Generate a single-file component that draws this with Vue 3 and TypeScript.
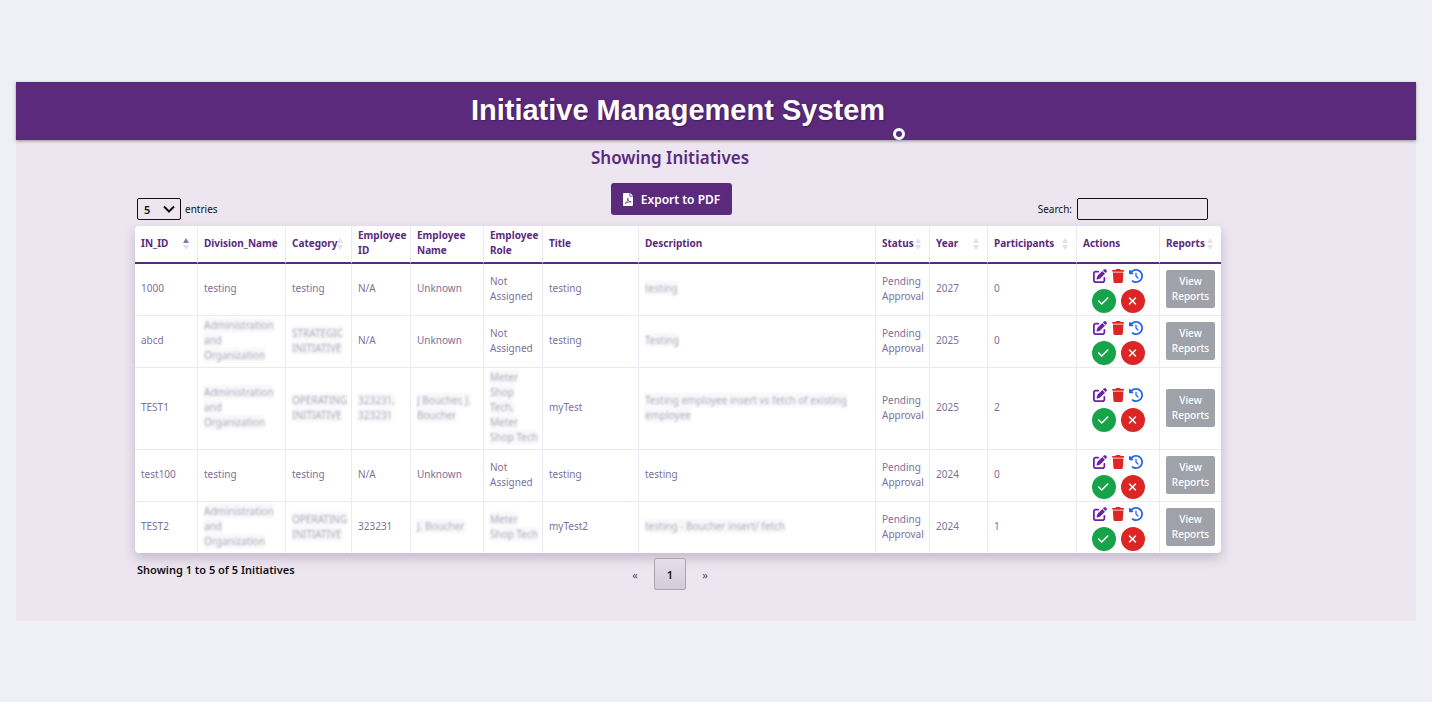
<script setup lang="ts">
import { ref } from 'vue'

interface Cell {
  text: string
  hidden?: boolean
}

interface Column {
  label: string
  key: string
  sort?: 'asc' | 'none'
}

const columns: Column[] = [
  { label: 'IN_ID', key: 'id', sort: 'asc' },
  { label: 'Division_Name', key: 'division', sort: 'none' },
  { label: 'Category', key: 'category', sort: 'none' },
  { label: 'Employee ID', key: 'employee-id' },
  { label: 'Employee Name', key: 'employee-name' },
  { label: 'Employee Role', key: 'role' },
  { label: 'Title', key: 'title' },
  { label: 'Description', key: 'description' },
  { label: 'Status', key: 'status', sort: 'none' },
  { label: 'Year', key: 'year', sort: 'none' },
  { label: 'Participants', key: 'participants', sort: 'none' },
  { label: 'Actions', key: 'actions' },
  { label: 'Reports', key: 'reports', sort: 'none' },
]

const t = (text: string): Cell => ({ text })
const h = (text: string): Cell => ({ text, hidden: true })

const rows: Cell[][] = [
  [t('1000'), t('testing'), t('testing'), t('N/A'), t('Unknown'), t('Not Assigned'), t('testing'), h('testing'), t('Pending Approval'), t('2027'), t('0')],
  [t('abcd'), h('Administration and Organization'), h('STRATEGIC INITIATIVE'), t('N/A'), t('Unknown'), t('Not Assigned'), t('testing'), h('Testing'), t('Pending Approval'), t('2025'), t('0')],
  [t('TEST1'), h('Administration and Organization'), h('OPERATING INITIATIVE'), h('323231, 323231'), h('J Boucher, J. Boucher'), h('Meter Shop Tech, Meter Shop Tech'), t('myTest'), h('Testing employee insert vs fetch of existing employee'), t('Pending Approval'), t('2025'), t('2')],
  [t('test100'), t('testing'), t('testing'), t('N/A'), t('Unknown'), t('Not Assigned'), t('testing'), t('testing'), t('Pending Approval'), t('2024'), t('0')],
  [t('TEST2'), h('Administration and Organization'), h('OPERATING INITIATIVE'), t('323231'), h('J. Boucher'), h('Meter Shop Tech'), t('myTest2'), h('testing - Boucher insert/ fetch'), t('Pending Approval'), t('2024'), t('1')],
]

const pageSize = ref('5')
const search = ref('')
</script>

<template>
  <div class="page">
    <main class="panel">
      <header class="banner">
        <h1>Initiative Management System<span class="ring"></span></h1>
      </header>

      <section class="content">
        <h2>Showing Initiatives</h2>

        <div class="toolbar">
          <label class="entries">
            <span class="select-wrap">
              <select v-model="pageSize">
                <option>5</option>
                <option>10</option>
                <option>25</option>
              </select>
              <svg class="chevron" viewBox="0 0 12 8"><path d="M1 1.5l5 5 5-5" /></svg>
            </span>
            entries
          </label>
          <button class="export" type="button">
            <svg viewBox="0 0 20 26">
              <path d="M2 0h11v7h7v17a2 2 0 0 1-2 2H2a2 2 0 0 1-2-2V2a2 2 0 0 1 2-2z" fill="#fff" />
              <path d="M14.500 0L20 5.500h-5.500z" fill="#fff" />
              <path d="M4 21c3-1 6-6 5.500-11 .5 5 3 8 7 8-4-1-8 0-12.500 3z" fill="none" stroke="#5b2a7c" stroke-width="1.500" />
            </svg>
            Export to PDF
          </button>
          <label class="search">Search: <input v-model="search" type="text" /></label>
        </div>

        <table>
          <colgroup>
            <col v-for="c in columns" :key="c.key" :class="'col-' + c.key" />
          </colgroup>
          <thead>
            <tr>
              <th v-for="c in columns" :key="c.key" scope="col">
                {{ c.label }}
                <svg v-if="c.sort" class="sort" :class="c.sort" viewBox="0 0 6 12">
                  <path class="up" d="M3 0l3 5H0z" />
                  <path class="down" d="M3 12l3-5H0z" />
                </svg>
              </th>
            </tr>
          </thead>
          <tbody>
            <tr v-for="(row, i) in rows" :key="i">
              <td v-for="(cell, j) in row" :key="j">
                <span :class="{ obscured: cell.hidden }">{{ cell.text }}</span>
              </td>
              <td class="actions">
                <div class="icons">
                  <button type="button" class="edit" aria-label="Edit">
                    <svg viewBox="0 0 512 512"><path d="M471.6 21.7c-21.9-21.9-57.3-21.9-79.2 0L362.3 51.7l97.9 97.9 30.1-30.1c21.9-21.9 21.9-57.3 0-79.2L471.6 21.7zm-299.2 220c-6.1 6.1-10.8 13.6-13.5 21.9l-29.6 88.8c-2.9 8.6-.6 18.1 5.8 24.6s15.900 8.700 24.600 5.800l88.800-29.600c8.200-2.700 15.700-7.400 21.900-13.500L437.700 172.300 339.700 74.300 172.400 241.700zM96 64C43 64 0 107 0 160V416c0 53 43 96 96 96H352c53 0 96-43 96-96V320c0-17.700-14.300-32-32-32s-32 14.300-32 32v96c0 17.700-14.300 32-32 32H96c-17.700 0-32-14.300-32-32V160c0-17.700 14.300-32 32-32h96c17.700 0 32-14.300 32-32s-14.300-32-32-32H96z" /></svg>
                  </button>
                  <button type="button" class="trash" aria-label="Delete">
                    <svg viewBox="0 0 448 512"><path d="M135.2 17.7L128 32H32C14.300 32 0 46.300 0 64S14.300 96 32 96H416c17.700 0 32-14.300 32-32s-14.300-32-32-32H320l-7.200-14.300C307.400 6.800 296.300 0 284.200 0H163.800c-12.100 0-23.200 6.800-28.600 17.700zM416 128H32L53.200 467c1.600 25.300 22.600 45 47.900 45H346.900c25.300 0 46.300-19.700 47.900-45L416 128z" /></svg>
                  </button>
                  <button type="button" class="history" aria-label="History">
                    <svg viewBox="0 0 512 512"><path d="M75 75L41 41C25.900 25.900 0 36.600 0 57.900V168c0 13.300 10.700 24 24 24H134.100c21.400 0 32.100-25.900 17-41l-30.800-30.800C155 85.500 203 64 256 64c106 0 192 86 192 192s-86 192-192 192c-40.800 0-78.600-12.700-109.700-34.400c-14.500-10.100-34.400-6.600-44.600 7.900s-6.600 34.400 7.900 44.600C151.200 495 201.700 512 256 512c141.400 0 256-114.600 256-256S397.400 0 256 0C185.300 0 121.300 28.700 75 75zm181 53c-13.300 0-24 10.700-24 24V256c0 6.400 2.500 12.500 7 17l72 72c9.400 9.400 24.600 9.400 33.900 0s9.400-24.600 0-33.900l-65-65V152c0-13.300-10.700-24-24-24z" /></svg>
                  </button>
                </div>
                <div class="decisions">
                  <button type="button" class="approve" aria-label="Approve">
                    <svg viewBox="0 0 448 512"><path d="M438.600 105.400c12.500 12.500 12.500 32.800 0 45.300l-256 256c-12.500 12.500-32.800 12.500-45.300 0l-128-128c-12.500-12.500-12.500-32.800 0-45.300s32.800-12.500 45.300 0L160 338.700 393.400 105.400c12.500-12.500 32.800-12.500 45.300 0z" /></svg>
                  </button>
                  <button type="button" class="reject" aria-label="Reject">
                    <svg viewBox="0 0 384 512"><path d="M342.600 150.600c12.500-12.500 12.500-32.800 0-45.300s-32.800-12.500-45.300 0L192 210.700 86.600 105.400c-12.500-12.500-32.800-12.500-45.300 0s-12.500 32.800 0 45.300L146.700 256 41.400 361.400c-12.500 12.500-12.500 32.800 0 45.300s32.800 12.500 45.300 0L192 301.300 297.400 406.600c12.500 12.500 32.800 12.500 45.300 0s12.500-32.800 0-45.300L237.300 256 342.600 150.600z" /></svg>
                  </button>
                </div>
              </td>
              <td><button type="button" class="report">View Reports</button></td>
            </tr>
          </tbody>
        </table>

        <div class="footer">
          <strong>Showing 1 to 5 of 5 Initiatives</strong>
          <nav class="pager" aria-label="Pages">
            <button type="button">«</button>
            <button type="button" class="current">1</button>
            <button type="button">»</button>
          </nav>
        </div>
      </section>
    </main>
  </div>
</template>

<style>
body {
  background: #eff0f5;
}
</style>

<style scoped>
.page {
  padding: 82px 16px;
  font-family: "Noto Sans", "Open Sans", sans-serif;
  font-size: 11px;
  line-height: 15px;
  color: #111;
}
.page * {
  box-sizing: border-box;
}
button,
input,
select {
  font: inherit;
  color: inherit;
}
button {
  border: 0;
  padding: 0;
  background: none;
}
svg {
  display: block;
}
.panel {
  background: #ede6f1;
  padding-bottom: 31px;
}
.banner {
  background: #5b2a7c;
  padding: 8px 76px 10px 0;
  text-align: center;
  box-shadow: 0 1px 3px rgba(0, 0, 0, 0.4);
}
h1 {
  display: inline-block;
  position: relative;
  margin: 0;
  font: bold 29px/40px "Liberation Sans", Arial, sans-serif;
  color: #fff;
  text-shadow: 1px 1px 2px rgba(0, 0, 0, 0.3);
  vertical-align: top;
}
.ring {
  position: absolute;
  right: -20px;
  bottom: -10px;
  width: 12px;
  height: 12px;
  border: 3px solid #fff;
  border-radius: 50%;
}
.content {
  padding: 6px 195px 0 119px;
}
h2 {
  margin: 0 16px 0 0;
  font-size: 17px;
  line-height: 24px;
  font-weight: 600;
  text-align: center;
  color: #5b2a7c;
}
.toolbar {
  display: grid;
  grid-template-columns: 1fr auto 1fr;
  align-items: end;
  margin: 13px 13px 6px 0;
}
.entries,
.search {
  display: flex;
  align-items: center;
  gap: 4px;
  font-size: 10px;
}
.entries {
  padding-left: 2px;
}
.search {
  justify-content: end;
  gap: 5px;
}
.select-wrap {
  position: relative;
}
select {
  appearance: none;
  display: block;
  width: 44px;
  height: 22px;
  padding: 0 6px;
  border: 1px solid #111;
  border-radius: 2px;
  background: transparent;
  font-size: 11px;
  font-weight: 600;
}
.chevron {
  position: absolute;
  right: 6px;
  top: 7px;
  width: 12px;
  height: 8px;
  fill: none;
  stroke: #111;
  stroke-width: 2;
  pointer-events: none;
}
.search input {
  width: 131px;
  height: 22px;
  border: 1px solid #111;
  border-radius: 2px;
  background: transparent;
}
.export {
  display: flex;
  align-items: center;
  gap: 8px;
  height: 32px;
  margin-bottom: 5px;
  padding: 0 12px;
  border-radius: 3px;
  background: #5b2a7c;
  color: #fff;
  font-size: 12px;
  font-weight: 600;
}
.export svg {
  width: 10px;
  height: 13px;
}
table {
  width: 100%;
  table-layout: fixed;
  border-collapse: separate;
  border-spacing: 0;
  background: #fff;
  border-radius: 4px;
  font-size: 10px;
  box-shadow: 0 5px 12px rgba(40, 20, 60, 0.22);
}
.col-id { width: 63px; }
.col-division { width: 88px; }
.col-category { width: 66px; }
.col-employee-id { width: 59px; }
.col-employee-name { width: 73px; }
.col-role { width: 59px; }
.col-title { width: 96px; }
.col-status { width: 54px; }
.col-year { width: 58px; }
.col-participants { width: 89px; }
.col-actions { width: 83px; }
.col-reports { width: 61px; }
th,
td {
  padding: 2px 2px 4px 6px;
  border-right: 1px solid #eee8f3;
  text-align: left;
  vertical-align: middle;
}
th:last-child,
td:last-child {
  border-right: 0;
}
th {
  position: relative;
  z-index: 0;
  border-bottom: 2px solid #5b2a7c;
  color: #5b2a7c;
  font-weight: 700;
}
td {
  border-bottom: 1px solid #eee8f3;
  color: #7d709c;
}
tbody tr:last-child td {
  border-bottom: 0;
}
.actions {
  padding: 4px 0 2px 6px;
}
.sort {
  position: absolute;
  z-index: -1;
  right: 8px;
  top: 12px;
  width: 6px;
  height: 12px;
  fill: #e5deeb;
}
.sort.asc .up {
  fill: #8f70aa;
}
.obscured {
  background: rgba(190, 188, 205, 0.14);
  color: #8f8ba3;
  filter: blur(1px);
  opacity: 0.75;
}
.icons,
.decisions {
  display: flex;
  justify-content: center;
  align-items: center;
  gap: 5px;
  padding-right: 6px;
}
.icons {
  height: 16px;
  margin-bottom: 5px;
}
.icons svg {
  height: 14px;
}
.edit { fill: #6b21a8; }
.trash { fill: #dc2626; }
.history { fill: #2563eb; }
.decisions button {
  display: flex;
  align-items: center;
  justify-content: center;
  width: 24px;
  height: 24px;
  border-radius: 50%;
  fill: #fff;
}
.decisions svg {
  height: 12px;
}
.approve { background: #16a34a; }
.reject { background: #dc2626; }
.report {
  width: 49px;
  padding: 4px 0;
  border-radius: 2px;
  background: #9fa3a9;
  color: #fff;
  font-size: 10px;
  font-weight: 500;
}
.footer {
  display: grid;
  grid-template-columns: 1fr auto 1fr;
  align-items: center;
  margin: 5px 16px 0 0;
}
.footer strong {
  padding: 0 0 10px 2px;
  font-weight: 600;
}
.pager {
  display: flex;
  align-items: center;
}
.pager button {
  width: 38px;
  height: 32px;
  color: #555;
}
.pager .current {
  width: 32px;
  border: 1px solid #aaa4ae;
  border-radius: 2px;
  background: linear-gradient(#e6dfe9, #d3cbd8);
  color: #111;
  font-weight: 600;
}
</style>
